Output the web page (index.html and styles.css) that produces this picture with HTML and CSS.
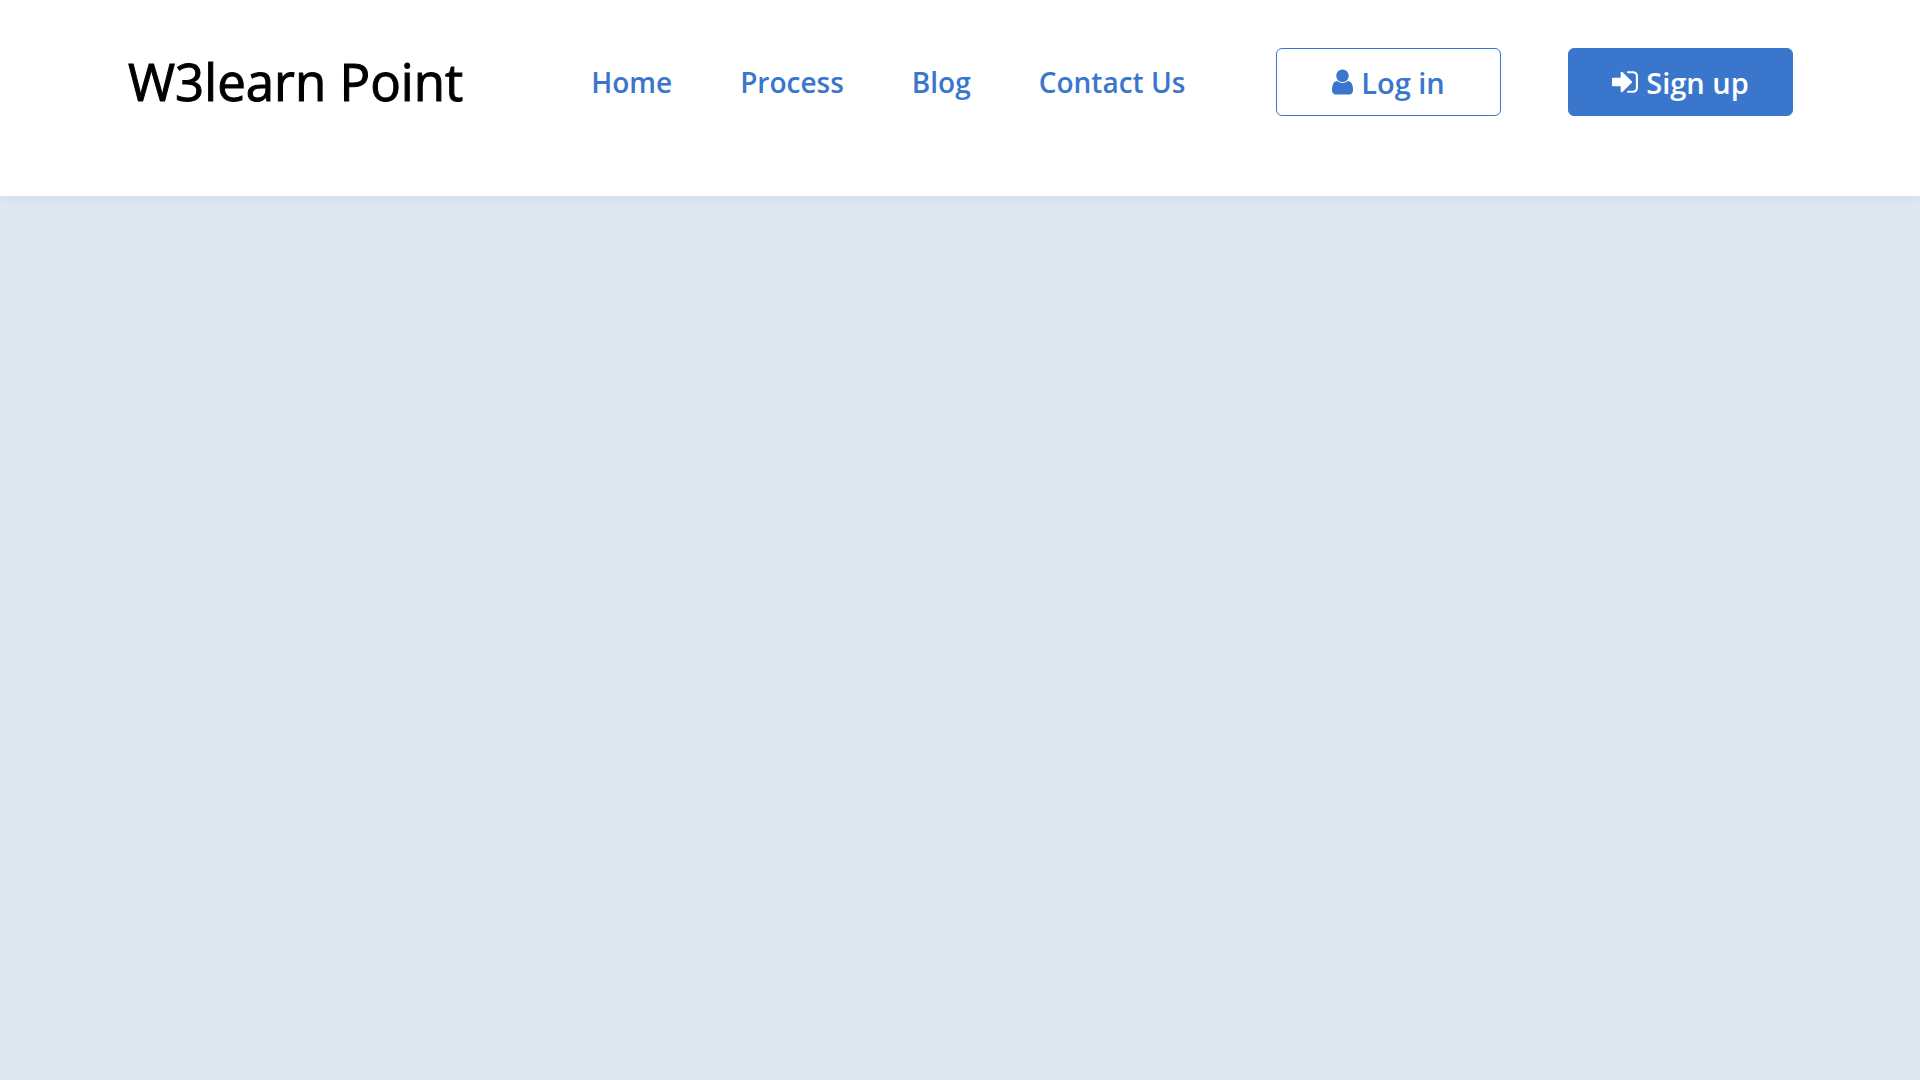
FILE: index.html
```html
<!DOCTYPE html>
<html lang="en">
<head>
<meta charset="utf-8">
<meta name="viewport" content="width=device-width, initial-scale=1">
<title>W3learn Point</title>
<link rel="stylesheet" href="styles.css">
</head>
<body>
<header class="header">
  <h1 class="logo">W3learn Point</h1>
  <nav class="nav">
    <a class="nav-link" href="#">Home</a>
    <a class="nav-link" href="#">Process</a>
    <a class="nav-link" href="#">Blog</a>
    <a class="nav-link" href="#">Contact Us</a>
  </nav>
  <div class="actions">
    <button class="btn btn-login" type="button">
      <svg class="icon-user" viewBox="256 128 1280 1536" aria-hidden="true"><path fill="currentColor" d="M1536 1399q0 109-62.5 187t-150.5 78h-854q-88 0-150.5-78t-62.5-187q0-85 8.5-160.5t31.5-152 58.5-131 94-89 134.5-34.5q131 128 313 128t313-128q76 0 134.5 34.5t94 89 58.5 131 31.5 152 8.5 160.5zm-256-887q0 159-112.5 271.5t-271.5 112.5-271.5-112.5-112.5-271.5 112.5-271.5 271.5-112.5 271.5 112.5 112.5 271.5z"/></svg>
      <span>Log in</span>
    </button>
    <button class="btn btn-signup" type="button">
      <svg class="icon-signin" viewBox="128 128 1536 1536" aria-hidden="true"><path fill="currentColor" d="M1312 896q0 26-19 45l-544 544q-19 19-45 19t-45-19-19-45v-288h-448q-26 0-45-19t-19-45v-384q0-26 19-45t45-19h448v-288q0-26 19-45t45-19 45 19l544 544q19 19 19 45zm352-352v704q0 119-84.5 203.5t-203.5 84.5h-320q-13 0-22.5-9.5t-9.5-22.5q0-4-1-20t-.5-26.5 3-23.5 10-19.5 20.5-6.5h320q66 0 113-47t47-113v-704q0-66-47-113t-113-47h-312l-11.5-1-11.5-3-8-5.5-7-9-2-13.5q0-4-1-20t-.5-26.5 3-23.5 10-19.5 20.5-6.5h320q119 0 203.5 84.5t84.5 203.5z"/></svg>
      <span>Sign up</span>
    </button>
  </div>
</header>
</body>
</html>
```
FILE: styles.css
```css
* {
  box-sizing: border-box;
}

body {
  margin: 0;
  min-height: 100vh;
  background: #dee8f0;
  font-family: "Segoe UI", "Open Sans", "Noto Sans", sans-serif;
}

.header {
  display: flex;
  align-items: flex-start;
  padding: 48px 127px 80px 128px;
  background: #fff;
  box-shadow: 0 0 12px rgba(58, 118, 204, 0.12);
}

.logo {
  margin: 0;
  color: #000;
  font-size: 51px;
  font-weight: 500;
  line-height: 66px;
  white-space: nowrap;
  -webkit-text-stroke: 1px #000;
}

.nav {
  display: flex;
  gap: 68px;
  margin-left: 128px;
}

.nav-link {
  color: #3a76cc;
  font-size: 28px;
  font-weight: 600;
  line-height: 68px;
  text-decoration: none;
  white-space: nowrap;
}

.actions {
  display: flex;
  gap: 67px;
  margin-left: auto;
}

.btn {
  display: flex;
  align-items: center;
  justify-content: center;
  gap: 8px;
  width: 225px;
  height: 68px;
  padding: 0;
  border: 1px solid #3a76cc;
  border-radius: 6px;
  font-family: inherit;
  font-size: 29px;
  font-weight: 600;
  cursor: pointer;
}

.btn-login {
  background: #fff;
  color: #3a76cc;
}

.btn-signup {
  background: #3a76cc;
  color: #fff;
}

.icon-user {
  width: 21px;
  height: 26px;
}

.icon-signin {
  width: 26px;
  height: 26px;
}
```
